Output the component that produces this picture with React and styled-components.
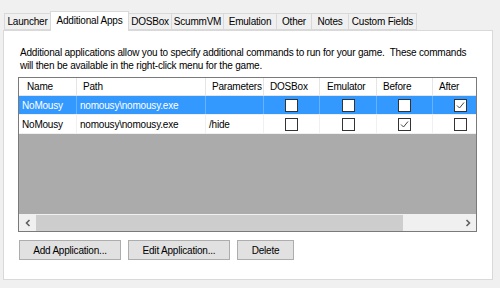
import React from "react";
import styled, { createGlobalStyle } from "styled-components";

const GlobalStyle = createGlobalStyle`
  html, body { margin: 0; padding: 0; }
  body {
    background: #f0f0f0;
    font-family: "Liberation Sans", Arial, sans-serif;
    font-size: 10px;
    letter-spacing: -0.2px;
    color: #000;
  }
`;

const Window = styled.div`
  width: 500px;
  height: 288px;
  box-sizing: border-box;
  padding: 11px 8px 0 3px;
  background: #f0f0f0;
  overflow: hidden;
`;

const TabStrip = styled.div`
  display: flex;
  align-items: flex-end;
  height: 19px;
  padding-left: 1px;
  position: relative;
  z-index: 1;
`;

const Tab = styled.div`
  box-sizing: border-box;
  width: ${(p) => p.$w}px;
  height: ${(p) => (p.$active ? 20 : 17)}px;
  margin-left: ${(p) => (p.$first ? 0 : -1)}px;
  margin-bottom: ${(p) => (p.$active ? -1 : 0)}px;
  padding-bottom: ${(p) => (p.$active ? 2 : 0)}px;
  border: 1px solid #d9d9d9;
  border-bottom: ${(p) => (p.$active ? "none" : "1px solid #d9d9d9")};
  background: ${(p) => (p.$active ? "#fff" : "#f0f0f0")};
  position: relative;
  z-index: ${(p) => (p.$active ? 2 : 1)};
  display: flex;
  align-items: center;
  justify-content: center;
  white-space: nowrap;
`;

const Panel = styled.div`
  box-sizing: border-box;
  width: 490px;
  height: 250px;
  background: #fff;
  border: 1px solid #d9d9d9;
  padding: 15px 0 0 14px;
  display: flex;
  flex-direction: column;
`;

const Description = styled.div`
  padding-left: 2px;
  line-height: 13px;
  white-space: pre;
`;

const ListView = styled.div`
  box-sizing: border-box;
  margin-top: 5px;
  width: 459px;
  height: 155px;
  border: 1px solid #7a7a7a;
  display: flex;
  flex-direction: column;
  overflow: hidden;
`;

const ListBody = styled.div`
  flex: 1;
  background: #ababab;
  overflow: hidden;
`;

const GridRow = styled.div`
  display: grid;
  grid-template-columns: 58px 129px 58px 56px 57px 56px 56px;
  width: 470px;
  box-sizing: border-box;
  height: ${(p) => (p.$header ? 18 : 19)}px;
  background: ${(p) => (p.$selected ? "#3399ff" : "#fff")};
  color: ${(p) => (p.$selected ? "#fff" : "#000")};
  border-bottom: 1px solid ${(p) => (p.$header ? "#e5e5e5" : "#f0f0f0")};
`;

const HeaderCell = styled.div`
  box-sizing: border-box;
  border-right: 1px solid #e5e5e5;
  padding-left: ${(p) => p.$pad || 6}px;
  display: flex;
  align-items: center;
  white-space: nowrap;
  overflow: hidden;
`;

const Cell = styled.div`
  box-sizing: border-box;
  border-right: 1px solid ${(p) => (p.$selected ? "#66b2ff" : "#f0f0f0")};
  padding-left: 3px;
  display: flex;
  align-items: center;
  justify-content: ${(p) => (p.$center ? "center" : "flex-start")};
  white-space: nowrap;
  overflow: hidden;
`;

const Box = styled.div`
  box-sizing: border-box;
  width: 13px;
  height: 13px;
  margin-left: -3px;
  border: 1px solid #333;
  background: #fff;
  display: flex;
  align-items: center;
  justify-content: center;
`;

const ScrollBar = styled.div`
  height: 16px;
  background: #f0f0f0;
  display: flex;
  align-items: stretch;
  border-top: 1px solid #f0f0f0;
`;

const ArrowButton = styled.div`
  width: 17px;
  display: flex;
  align-items: center;
  justify-content: center;
`;

const Track = styled.div`
  flex: 1;
  display: flex;
  align-items: stretch;
  padding: 0 56px 0 0;
`;

const Thumb = styled.div`
  flex: 1;
  background: #cdcdcd;
`;

const ButtonRow = styled.div`
  display: flex;
  gap: 7px;
  margin-top: 8px;
  padding-left: 1px;
`;

const Button = styled.div`
  box-sizing: border-box;
  width: ${(p) => p.$w}px;
  height: 20px;
  background: #e1e1e1;
  border: 1px solid #adadad;
  display: flex;
  align-items: center;
  justify-content: center;
  white-space: nowrap;
`;

const Check = ({ checked }) => (
  <Box>
    {checked && (
      <svg width="9" height="9" viewBox="0 0 9 9">
        <path d="M1 4.5 L3.5 7 L8 1.5" fill="none" stroke="#444" strokeWidth="1" />
      </svg>
    )}
  </Box>
);

const Chevron = ({ dir }) => (
  <svg width="6" height="8" viewBox="0 0 6 8">
    <path
      d={dir === "left" ? "M4.5 1 L1.5 4 L4.5 7" : "M1.5 1 L4.5 4 L1.5 7"}
      fill="none"
      stroke="#606060"
      strokeWidth="1.6"
    />
  </svg>
);

const tabs = [
  ["Launcher", 47],
  ["Additional Apps", 79],
  ["DOSBox", 44],
  ["ScummVM", 53],
  ["Emulation", 54],
  ["Other", 36],
  ["Notes", 38],
  ["Custom Fields", 69],
];

const headers = [
  ["Name", 8],
  ["Path", 6],
  ["Parameters", 6],
  ["DOSBox", 6],
  ["Emulator", 7],
  ["Before", 6],
  ["After", 6],
];

const rows = [
  { name: "NoMousy", path: "nomousy\\nomousy.exe", params: "", checks: [false, false, false, true], selected: true },
  { name: "NoMousy", path: "nomousy\\nomousy.exe", params: "/hide", checks: [false, false, true, false], selected: false },
];

export default function App() {
  return (
    <Window>
      <GlobalStyle />
      <TabStrip>
        {tabs.map(([label, w], i) => (
          <Tab key={label} $w={w} $first={i === 0} $active={i === 1}>
            {label}
          </Tab>
        ))}
      </TabStrip>
      <Panel>
        <Description>
          {"Additional applications allow you to specify additional commands to run for your game.  These commands\nwill then be available in the right-click menu for the game."}
        </Description>
        <ListView>
          <ListBody>
            <GridRow $header>
              {headers.map(([h, pad]) => (
                <HeaderCell key={h} $pad={pad}>
                  {h}
                </HeaderCell>
              ))}
            </GridRow>
            {rows.map((r, i) => (
              <GridRow key={i} $selected={r.selected}>
                <Cell $selected={r.selected}>{r.name}</Cell>
                <Cell $selected={r.selected}>{r.path}</Cell>
                <Cell $selected={r.selected}>{r.params}</Cell>
                {r.checks.map((c, j) => (
                  <Cell key={j} $selected={r.selected} $center>
                    <Check checked={c} />
                  </Cell>
                ))}
              </GridRow>
            ))}
          </ListBody>
          <ScrollBar>
            <ArrowButton>
              <Chevron dir="left" />
            </ArrowButton>
            <Track>
              <Thumb />
            </Track>
            <ArrowButton>
              <Chevron dir="right" />
            </ArrowButton>
          </ScrollBar>
        </ListView>
        <ButtonRow>
          <Button $w={102}>Add Application...</Button>
          <Button $w={102}>Edit Application...</Button>
          <Button $w={57}>Delete</Button>
        </ButtonRow>
      </Panel>
    </Window>
  );
}
